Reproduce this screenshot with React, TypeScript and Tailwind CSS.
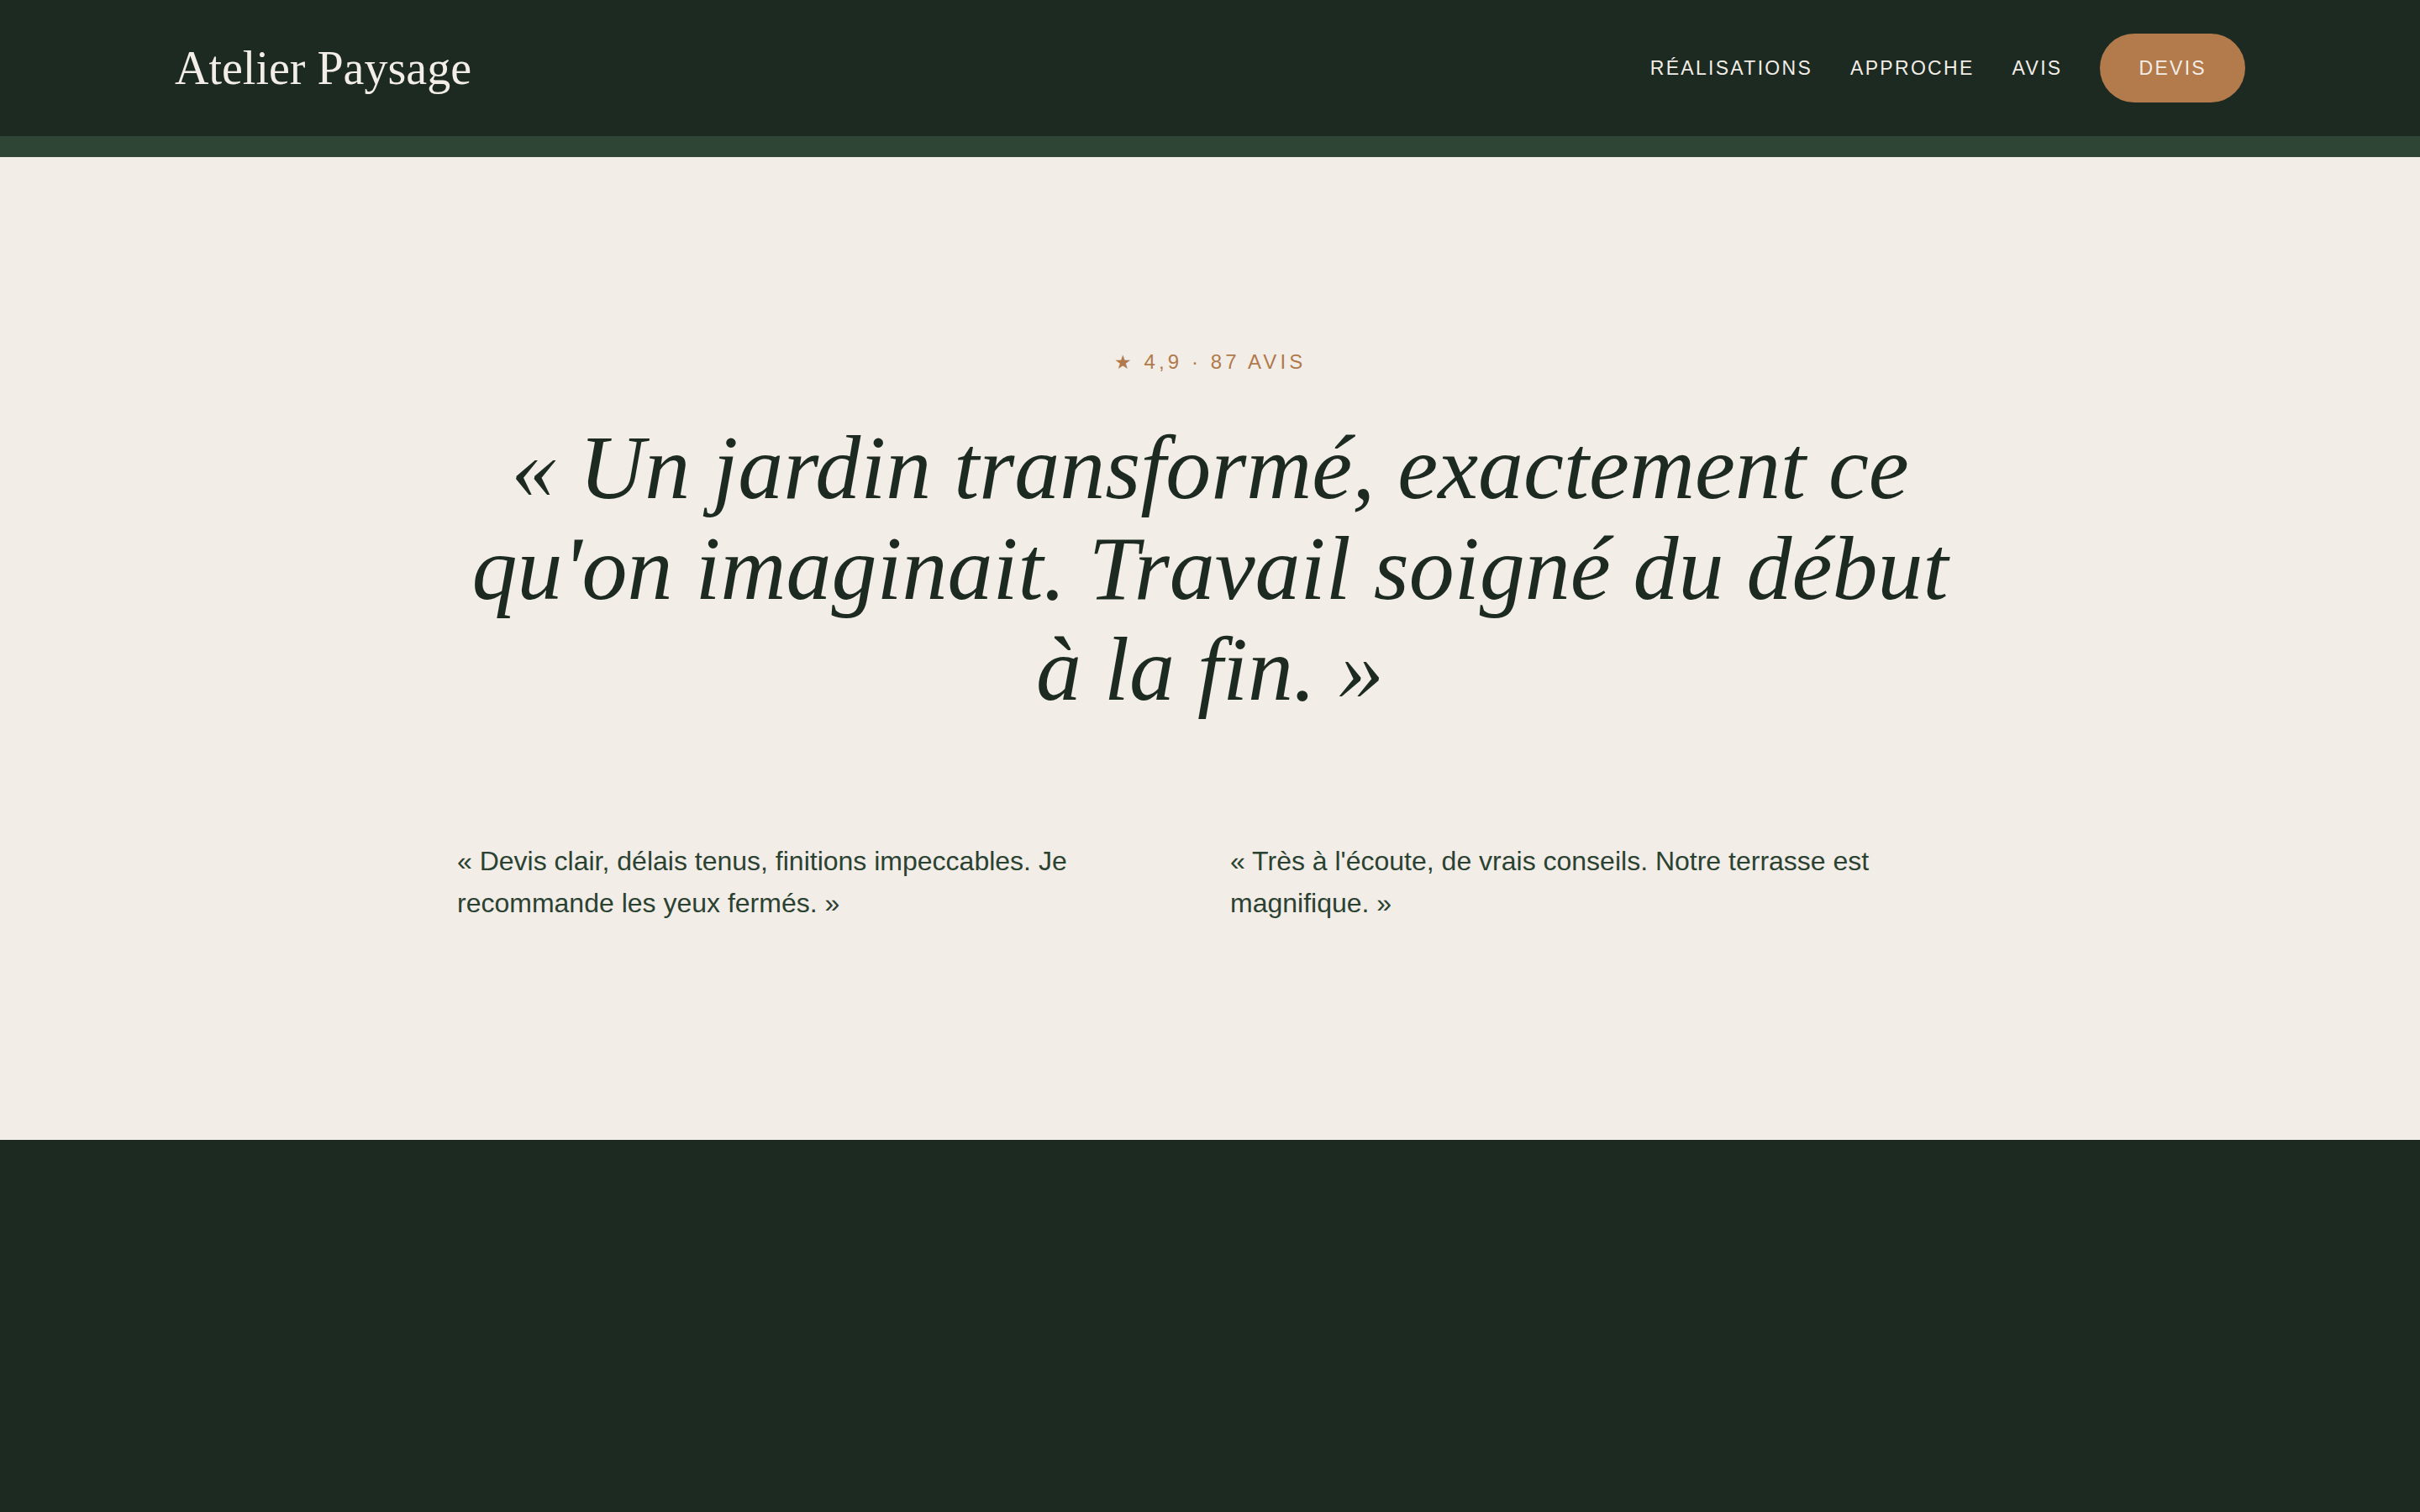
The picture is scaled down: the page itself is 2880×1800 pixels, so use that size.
const navLinks = ['Réalisations', 'Approche', 'Avis'];

const reviews = [
  '« Devis clair, délais tenus, finitions impeccables. Je recommande les yeux fermés. »',
  "« Très à l'écoute, de vrais conseils. Notre terrasse est magnifique. »",
];

function Header() {
  return (
    <header className="bg-[#1c2a22]">
      <div className="mx-auto flex h-[162px] max-w-[2464px] items-center justify-between">
        <a href="#" className="font-['Liberation_Serif',serif] text-[56px] leading-none text-[#f2ede6]">
          Atelier Paysage
        </a>
        <nav className="flex items-center gap-[45px] font-['Liberation_Sans',sans-serif]">
          {navLinks.map(link => (
            <a key={link} href="#" className="text-[23px] uppercase tracking-[0.1em] text-[#f2ede6]">
              {link}
            </a>
          ))}
          <a
            href="#"
            className="flex h-[82px] items-center rounded-full bg-[#b37a4b] px-[46px] text-[23px] uppercase tracking-[0.1em] text-[#f2ede6]"
          >
            Devis
          </a>
        </nav>
      </div>
      <div className="h-[25px] bg-[#2e4535]" />
    </header>
  );
}

function Testimonials() {
  return (
    <section className="bg-[#f2ede6] pt-[228px] pb-[257px]">
      <p className="text-center font-['Liberation_Sans',sans-serif] text-[24px] leading-[32px] tracking-[0.17em] text-[#b07a4c]">
        <span className="text-[23px]">★</span> 4,9 · 87 AVIS
      </p>

      <blockquote className="mx-auto mt-[50px] max-w-[1800px] text-center font-['Liberation_Serif',serif] text-[108px] italic leading-[120px] text-[#1c2a22]">
        « Un jardin transformé, exactement ce qu'on imaginait. Travail soigné du début à la fin. »
      </blockquote>

      <div className="mx-auto mt-[143px] grid max-w-[1792px] grid-cols-2 gap-12 font-['Liberation_Sans',sans-serif] text-[32px] leading-[50px] text-[#2b4232]">
        {reviews.map(text => (
          <p key={text}>{text}</p>
        ))}
      </div>
    </section>
  );
}

export default function App() {
  return (
    <div className="min-h-screen bg-[#1c2a22]">
      <Header />
      <Testimonials />
    </div>
  );
}
